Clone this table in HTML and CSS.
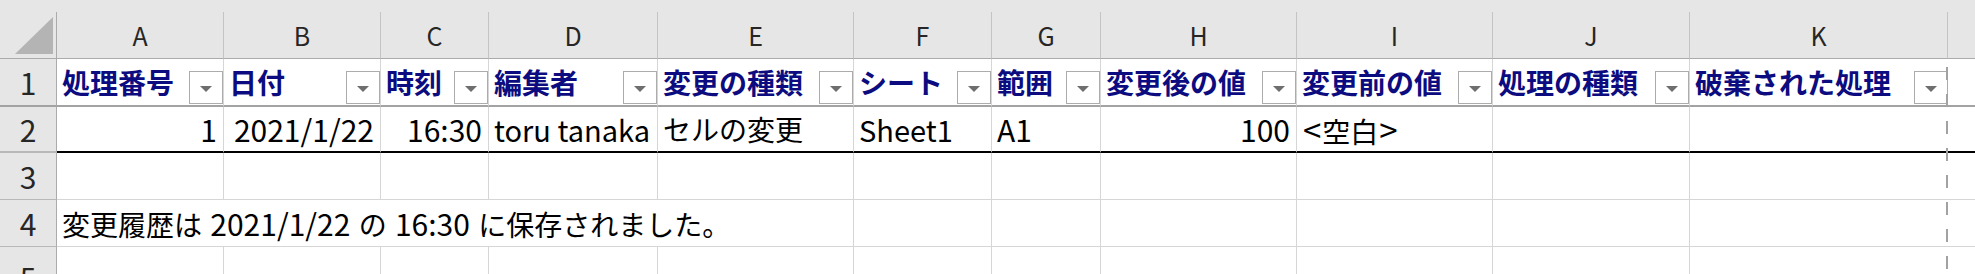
FILE: index.html
```html
<!DOCTYPE html>
<html lang="ja">
<head>
  <meta charset="UTF-8">
  <title>変更履歴</title>
  <link rel="stylesheet" href="styles.css">
</head>
<body>
  <div class="sheet">
    <div class="strip"></div>

    <!-- 列見出し -->
    <div class="row colhead">
      <div class="corner">
        <svg width="56" height="46" viewBox="0 0 56 46"><polygon points="53,5 53,42 15,42" fill="#b4b4b4"/></svg>
      </div>
      <div>A</div><div>B</div><div>C</div><div>D</div><div>E</div><div>F</div>
      <div>G</div><div>H</div><div>I</div><div>J</div><div>K</div><div class="rest"></div>
    </div>

    <!-- 1行目: フィルター付きの見出し -->
    <div class="row r1">
      <div class="rh">1</div>
      <div class="cell th"><span>処理番号</span><i class="filter"></i></div>
      <div class="cell th"><span>日付</span><i class="filter"></i></div>
      <div class="cell th"><span>時刻</span><i class="filter"></i></div>
      <div class="cell th"><span>編集者</span><i class="filter"></i></div>
      <div class="cell th"><span>変更の種類</span><i class="filter"></i></div>
      <div class="cell th"><span>シート</span><i class="filter"></i></div>
      <div class="cell th"><span>範囲</span><i class="filter"></i></div>
      <div class="cell th"><span>変更後の値</span><i class="filter"></i></div>
      <div class="cell th"><span>変更前の値</span><i class="filter"></i></div>
      <div class="cell th"><span>処理の種類</span><i class="filter"></i></div>
      <div class="cell th last"><span>破棄された処理</span><i class="filter"></i></div>
      <div class="cell rest"></div>
    </div>

    <div class="row r2">
      <div class="rh">2</div>
      <div class="cell num lat">1</div>
      <div class="cell num lat">2021/1/22</div>
      <div class="cell num lat">16:30</div>
      <div class="cell word">toru tanaka</div>
      <div class="cell">セルの変更</div>
      <div class="cell word">Sheet1</div>
      <div class="cell lat">A1</div>
      <div class="cell num lat">100</div>
      <div class="cell"><span><span class="br">&lt;</span>空白<span class="br">&gt;</span></span></div>
      <div class="cell"></div>
      <div class="cell last"></div>
      <div class="cell rest"></div>
    </div>

    <div class="row r3">
      <div class="rh">3</div>
      <div class="cell"></div><div class="cell"></div><div class="cell"></div><div class="cell"></div>
      <div class="cell"></div><div class="cell"></div><div class="cell"></div><div class="cell"></div>
      <div class="cell"></div><div class="cell"></div><div class="cell last"></div><div class="cell rest"></div>
    </div>

    <div class="row r4">
      <div class="rh">4</div>
      <div class="cell note"><span>変更履歴は <span class="lat">2021/1/22</span> の <span class="lat">16:30</span> に保存されました。</span></div>
      <div class="cell"></div><div class="cell"></div><div class="cell"></div><div class="cell"></div>
      <div class="cell"></div><div class="cell last"></div><div class="cell rest"></div>
    </div>

    <div class="row r5">
      <div class="rh">5</div>
      <div class="cell"></div><div class="cell"></div><div class="cell"></div><div class="cell"></div>
      <div class="cell"></div><div class="cell"></div><div class="cell"></div><div class="cell"></div>
      <div class="cell"></div><div class="cell"></div><div class="cell last"></div><div class="cell rest"></div>
    </div>

    <!-- 改ページ位置 -->
    <div class="page-break"></div>
  </div>
</body>
</html>
```

FILE: styles.css
```css
body { margin: 0; background: #fff; font-family: "Noto Sans CJK JP", sans-serif; overflow: hidden; }

.sheet { position: relative; width: 1975px; height: 274px; overflow: hidden; }
.strip { height: 12px; background: #e6e6e6; }

.row {
  display: grid;
  grid-template-columns: 57px 167px 157px 108px 169px 196px 138px 109px 196px 196px 197px 258px 1fr;
}
.row > div { box-sizing: border-box; min-width: 0; }

/* 列見出し */
.colhead { height: 47px; background: #e6e6e6; }
.colhead > div {
  display: flex; align-items: center; justify-content: center;
  border-right: 1px solid #c4c4c4; border-bottom: 1px solid #ababab;
  font-size: 25px; line-height: 1; color: #262626;
}
.colhead .corner { border-right-color: #ababab; display: block; }
.colhead .corner svg { display: block; }
.colhead .rest { border-right: none; }

/* 行見出し */
.rh {
  display: flex; align-items: center; justify-content: center;
  background: #e6e6e6; border-right: 1px solid #ababab; border-bottom: 1px solid #b8b8b8;
  font-size: 30px; line-height: 1; color: #262626;
}

.cell {
  display: flex; align-items: center;
  padding: 0 5px;
  border-right: 1px solid #d6d6d6; border-bottom: 1px solid #d6d6d6;
  font-size: 28px; line-height: 1; color: #000; white-space: nowrap;
}
.cell.num { justify-content: flex-end; padding-right: 6px; }
.cell.last { border-right: none; }
.cell.rest { border-right: none; }
.lat { font-size: 30px; }
.word { font-size: 29px; }
.br { font-size: 33px; margin: 0 1px; }
.note { word-spacing: 2px; }

.r1 { height: 48px; }
.r1 > div { border-bottom: 2px solid #a3a3a3; }
.r2 { height: 46px; }
.r2 .cell { border-bottom: 2px solid #000; }
.r2 .rh { border-bottom-width: 2px; }
.r3, .r4 { height: 47px; }
.r5 { height: 60px; }

.th { justify-content: space-between; padding-right: 0; font-weight: 700; color: #0c0c80; }
.filter {
  flex: none; align-self: flex-end; margin-bottom: 1px;
  width: 34px; height: 33px; box-sizing: border-box;
  border: 1px solid #acacac; background: #fff;
  display: flex; align-items: center; justify-content: center;
}
.filter::after {
  content: ""; width: 0; height: 0;
  border-left: 6px solid transparent; border-right: 6px solid transparent;
  border-top: 6px solid #6e6e6e; margin-top: 2px;
}

.note { grid-column: span 5; }

.page-break {
  position: absolute; left: 1946px; top: 59px; bottom: 0; width: 2px;
  background: repeating-linear-gradient(to bottom, transparent 0 8px, #a2a2a2 8px 21px, transparent 21px 27px);
}
```
